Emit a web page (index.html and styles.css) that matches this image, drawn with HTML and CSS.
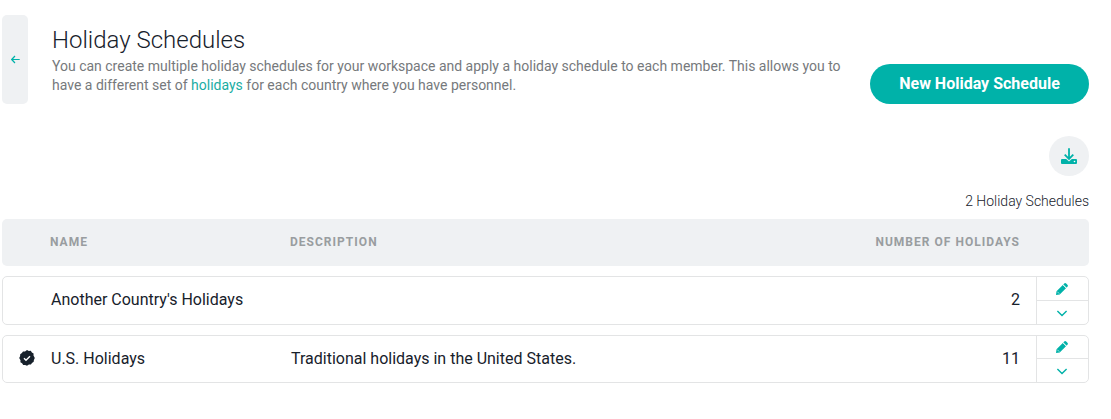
FILE: index.html
```html
<!DOCTYPE html>
<html lang="en">
<head>
  <meta charset="UTF-8" />
  <title>Holiday Schedules</title>
  <link rel="stylesheet" href="styles.css">
</head>
<body>
  <div class="page">
    <header class="page-header">
      <button class="back" aria-label="Back">
        <svg width="9" height="9" viewBox="0 0 9 9"><path d="M8.700 4.500H.8M4 1L.7 4.500 4 8" /></svg>
      </button>
      <div class="intro">
        <h1>Holiday Schedules</h1>
        <p>You can create multiple holiday schedules for your workspace and apply a holiday schedule to each member. This allows you to have a different set of <a href="#">holidays</a> for each country where you have personnel.</p>
      </div>
      <button class="new-schedule">New Holiday Schedule</button>
    </header>

    <div class="toolbar">
      <button class="download" aria-label="Download">
        <svg width="16" height="16" viewBox="0 0 16 16">
          <path class="tray" d="M1 11h4.2L8 13.4 10.8 11H15a1 1 0 0 1 1 1v3a1 1 0 0 1-1 1H1a1 1 0 0 1-1-1v-3a1 1 0 0 1 1-1z" />
          <circle class="hole" cx="13.5" cy="13.5" r=".8" />
          <path class="arrow" d="M8 .2v10.600M3.700 6.700L8 11l4.300-4.300" />
        </svg>
      </button>
    </div>
    <div class="count">2 Holiday Schedules</div>

    <div class="table">
      <div class="table-head">
        <div class="name">Name</div>
        <div>Description</div>
        <div class="number">Number of Holidays</div>
      </div>

      <div class="row row-tall">
        <div class="name">Another Country's Holidays</div>
        <div class="description"></div>
        <div class="number">2</div>
        <div class="actions">
          <button aria-label="Edit">
            <svg class="pencil" width="12" height="12" viewBox="0 0 12 12"><path d="M8.200.6a1.400 1.400 0 0 1 2 0l1.200 1.200a1.400 1.400 0 0 1 0 2l-.9.9-3.200-3.200zM6.800 2L10 5.200 3.700 11.500 0 12l.5-3.700z" /><path class="cut" d="M1.300 8.700l2 2M7 1.700l3.300 3.300" /></svg>
          </button>
          <button aria-label="More">
            <svg class="chevron" width="12" height="7" viewBox="0 0 12 7"><path d="M1.400 1L6 5.600 10.600 1" /></svg>
          </button>
        </div>
      </div>

      <div class="row">
        <div class="name">
          <svg class="badge" width="16" height="16" viewBox="0 0 16 16"><path d="M8 0l1.800.9 2-.2 1.100 1.700 1.700 1.100-.1 2L15.800 8l-.9 1.900-.2 1.900-1.700 1.100-1.100 1.700-2-.1L8 15.800l-1.800-.9-2 .1-1.100-1.700-1.700-1.100.1-2L.2 8l.9-1.800.1-2L2.900 3.100 4 1.400l2 .1z" /><path class="check" d="M5 8.200l2 2 4-4" /></svg>
          U.S. Holidays
        </div>
        <div class="description">Traditional holidays in the United States.</div>
        <div class="number">11</div>
        <div class="actions">
          <button aria-label="Edit">
            <svg class="pencil" width="12" height="12" viewBox="0 0 12 12"><path d="M8.200.6a1.400 1.400 0 0 1 2 0l1.200 1.200a1.400 1.400 0 0 1 0 2l-.9.9-3.200-3.200zM6.800 2L10 5.200 3.700 11.500 0 12l.5-3.700z" /><path class="cut" d="M1.300 8.700l2 2M7 1.700l3.300 3.300" /></svg>
          </button>
          <button aria-label="More">
            <svg class="chevron" width="12" height="7" viewBox="0 0 12 7"><path d="M1.400 1L6 5.600 10.600 1" /></svg>
          </button>
        </div>
      </div>
    </div>
  </div>
</body>
</html>
```
FILE: styles.css
```css
* {
  box-sizing: border-box;
}

body {
  margin: 0;
  background: #fff;
  color: #17212b;
  font-family: Roboto, sans-serif;
}

button {
  display: flex;
  align-items: center;
  justify-content: center;
  padding: 0;
  border: none;
  background: none;
  font-family: inherit;
  cursor: pointer;
}

svg {
  display: block;
  fill: none;
}

.page {
  width: 1087px;
  margin-left: 2px;
  padding-top: 15px;
}

.page-header {
  display: flex;
  height: 89px;
}

.back {
  width: 26px;
  background: #eff1f3;
  border-radius: 5px;
}

.back path {
  stroke: #00b2a9;
  stroke-width: 1.2;
}

.intro {
  width: 800px;
  margin-left: 24px;
  padding-top: 10px;
}

h1 {
  margin: 0 0 2px;
  font-size: 24px;
  font-weight: 300;
  line-height: 30px;
}

p {
  margin: 0;
  color: #76797c;
  font-size: 14px;
  line-height: 19px;
}

a {
  color: #1aada3;
  text-decoration: none;
}

.new-schedule {
  align-self: flex-end;
  width: 219px;
  height: 40px;
  margin-left: auto;
  padding-bottom: 2px;
  background: #00b2a9;
  border-radius: 20px;
  color: #fff;
  font-size: 16px;
  font-weight: 700;
}

.toolbar {
  display: flex;
  justify-content: flex-end;
  margin-top: 32px;
}

.download {
  width: 40px;
  height: 40px;
  background: #eff1f3;
  border-radius: 50%;
}

.tray {
  fill: #00b2a9;
}

.hole {
  fill: #fff;
}

.arrow {
  stroke: #00b2a9;
  stroke-width: 1.8;
}

.count {
  margin-top: 15px;
  height: 28px;
  font-size: 14px;
  font-weight: 300;
  line-height: 20px;
  text-align: right;
}

.table {
  display: flex;
  flex-direction: column;
  gap: 10px;
}

.table-head,
.row {
  display: grid;
  grid-template-columns: 288px 1fr 200px 53px;
  align-items: center;
  border-radius: 5px;
}

.table-head {
  height: 47px;
  padding-bottom: 2px;
  background: #eff1f3;
  color: #999da0;
  font-size: 12px;
  font-weight: 700;
  letter-spacing: 1.02px;
  text-transform: uppercase;
}

.row {
  grid-template-columns: 288px 1fr 200px 52px;
  height: 48px;
  border: 1px solid #e3e4e5;
  font-size: 16px;
}

.row-tall {
  height: 49px;
}

.name {
  position: relative;
  padding-left: 48px;
}

.number {
  padding-right: 16px;
  text-align: right;
}

.row .name,
.row .description,
.row .number {
  padding-bottom: 2px;
}

.badge {
  position: absolute;
  left: 16px;
  top: 1px;
  fill: #17212b;
}

.check {
  fill: none;
  stroke: #fff;
  stroke-width: 1.4;
}

.actions {
  display: grid;
  grid-template-rows: 23px 1fr;
  height: 100%;
  padding-right: 1px;
  border-left: 1px solid #e3e4e5;
}

.row:last-child .actions {
  grid-template-rows: 22px 1fr;
}

.actions button + button {
  margin-right: -1px;
  padding: 2px 1px 0 0;
  border-top: 1px solid #e3e4e5;
}

.pencil {
  fill: #00b2a9;
}

.cut {
  stroke: #fff;
  stroke-width: 0.6;
}

.chevron {
  stroke: #00b2a9;
  stroke-width: 1.4;
}
```
